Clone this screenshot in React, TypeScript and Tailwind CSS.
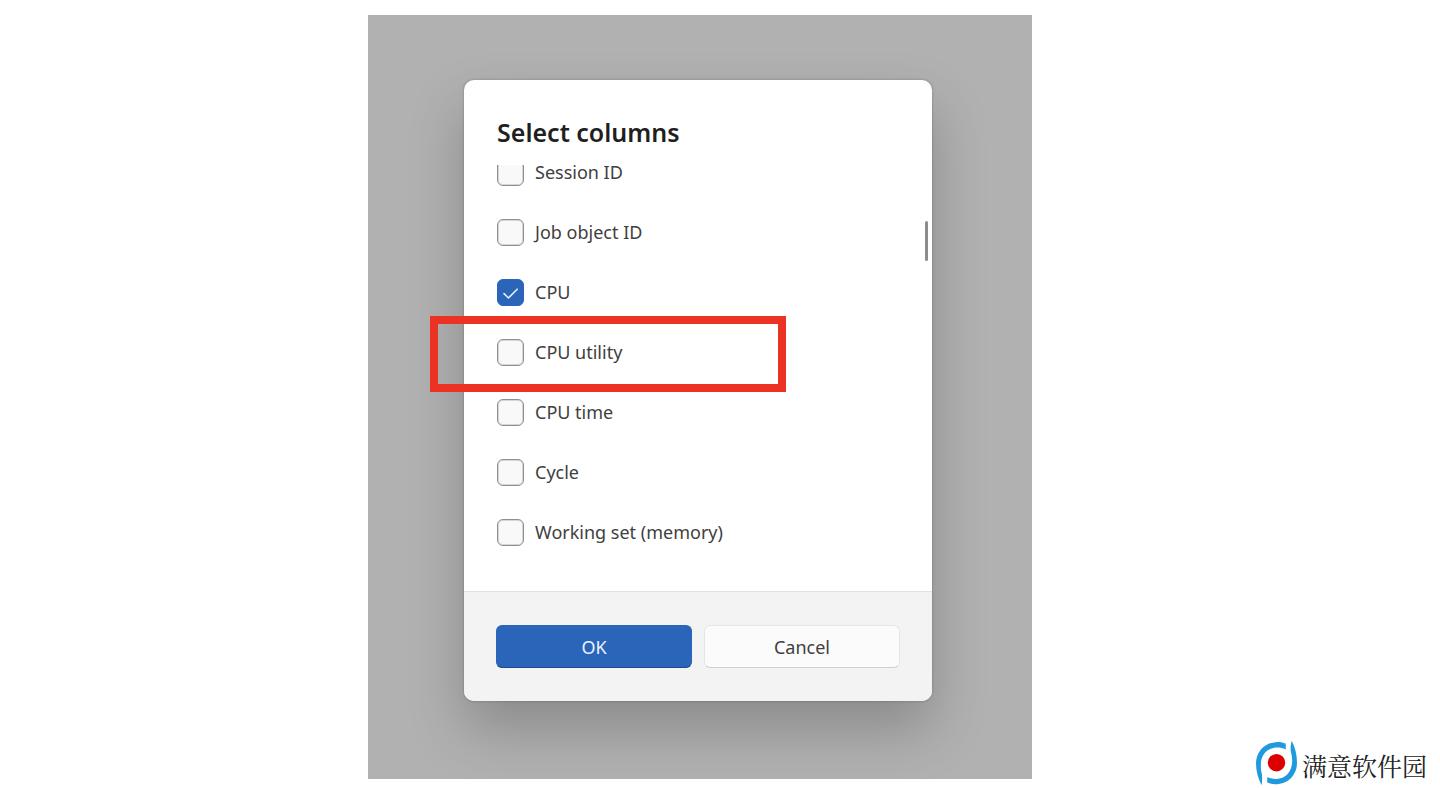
import { useState } from "react";

const COLUMNS = [
  "Session ID",
  "Job object ID",
  "CPU",
  "CPU utility",
  "CPU time",
  "Cycle",
  "Working set (memory)",
];

function ColumnOption({ label, initial }: { label: string; initial: boolean }) {
  const [checked, setChecked] = useState(initial);
  return (
    <li className="h-[60px] pt-4">
      <label className="flex w-fit items-start gap-[11px]">
        <span className="grid size-[27px] shrink-0">
          <input
            type="checkbox"
            checked={checked}
            onChange={(e) => setChecked(e.target.checked)}
            className="col-start-1 row-start-1 size-[27px] appearance-none rounded-md border border-[#8f8f8f] bg-[#f9f9f9] ring-1 ring-[#d6d6d6] ring-inset checked:border-[#2a65ba] checked:bg-[#2a65ba] checked:ring-[#2a65ba]"
          />
          {checked && (
            <svg
              viewBox="0 0 27 27"
              className="pointer-events-none col-start-1 row-start-1 size-[27px]"
              fill="none"
              stroke="#e4eefb"
              strokeWidth="1.6"
              strokeLinecap="round"
              strokeLinejoin="round"
              aria-hidden="true"
            >
              <path d="M7 14.6l4.5 4.4L20.2 10.2" />
            </svg>
          )}
        </span>
        <span className="text-lg leading-[26px] text-[#404040]">{label}</span>
      </label>
    </li>
  );
}

function Brand() {
  return (
    <div className="absolute right-[13px] bottom-[2px] flex items-center gap-1">
      <svg viewBox="45 35 130 138" className="h-[46px] w-[43px]" aria-hidden="true">
        <path
          fill="#1f9ade"
          d="M138 46C128 41 118 40 108 41C74 43 48 70 48 105C48 130 55 152 65 171C67 160 67 148 66 138C63 128 62 115 63 103C65 76 86 57 112 57C121 57 130 59 138 63Z"
        />
        <path
          fill="#1f9ade"
          d="M156 37C152 52 152 62 154 72C157 82 158 92 157 104C155 132 136 152 110 152C99 152 90 150 82 146V163C91 167 102 169 112 168C147 166 172 139 172 104C172 78 166 57 156 37Z"
        />
        <circle cx="110" cy="103" r="26.5" fill="#dc0000" />
      </svg>
      <span className="pt-1 text-[25px] leading-8 text-[#222222] [font-family:'Noto_Serif_CJK_SC','Noto_Sans_CJK_SC',serif]">
        满意软件园
      </span>
    </div>
  );
}

export default function App() {
  return (
    <div className="relative min-h-screen bg-white pt-[15px] pr-10 pb-[9px] [font-family:'Noto_Sans','Open_Sans',sans-serif]">
      <main className="mx-auto w-fit max-w-full bg-[#b1b1b1] pt-[65px] pr-[100px] pb-[78px] pl-24">
        <section
          role="dialog"
          aria-labelledby="dialog-title"
          className="relative w-[468px] rounded-[10px] bg-white shadow-[0_0_2px_1px_rgba(0,0,0,0.12),0_28px_56px_rgba(0,0,0,0.22)]"
        >
          <h1
            id="dialog-title"
            className="px-[33px] pt-[34px] pb-[15px] text-[25px] leading-9 font-semibold text-[#1f1f1f]"
          >
            Select columns
          </h1>
          <div className="mb-7 overflow-hidden px-[33px]">
            <ul className="-mt-[22px]">
              {COLUMNS.map((label) => (
                <ColumnOption key={label} label={label} initial={label === "CPU"} />
              ))}
            </ul>
          </div>
          <footer className="grid grid-cols-2 gap-3 rounded-b-[10px] border-t border-[#e2e2e2] bg-[#f3f3f3] px-8 py-[33px] text-lg leading-6">
            <button
              type="button"
              className="h-[43px] rounded-md border border-[#2a65ba] border-b-[#1d4a8c] bg-[#2a65ba] text-[#eaf2fc]"
            >
              OK
            </button>
            <button
              type="button"
              className="h-[43px] rounded-md border border-[#e6e6e6] border-b-[#cfcfcf] bg-[#fbfbfb] text-[#404040]"
            >
              Cancel
            </button>
          </footer>
          <div className="absolute top-[141px] right-1 h-10 w-[3px] rounded-full bg-[#8c8c8c]" />
          <div className="pointer-events-none absolute top-[236px] -left-[34px] h-[76px] w-[356px] border-8 border-[#eb3223]" />
        </section>
      </main>
      <Brand />
    </div>
  );
}
